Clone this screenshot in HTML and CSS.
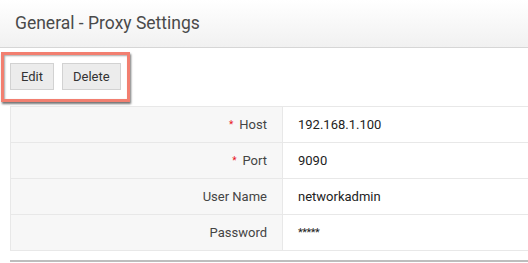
FILE: index.html
```html
<!DOCTYPE html>
<html lang="en">
<head>
  <meta charset="UTF-8">
  <title>General - Proxy Settings</title>
  <link rel="stylesheet" href="styles.css">
</head>
<body>

<header class="page-header">General - Proxy Settings</header>

<div class="toolbar">
  <button class="btn">Edit</button>
  <button class="btn">Delete</button>
</div>

<table class="details">
  <tr>
    <td class="label"><span class="req">*</span>Host</td>
    <td class="value">192.168.1.100</td>
  </tr>
  <tr>
    <td class="label"><span class="req">*</span>Port</td>
    <td class="value">9090</td>
  </tr>
  <tr>
    <td class="label">User Name</td>
    <td class="value">networkadmin</td>
  </tr>
  <tr>
    <td class="label">Password</td>
    <td class="value secret">*****</td>
  </tr>
</table>

<div class="next-section"></div>

</body>
</html>
```

FILE: styles.css
```css
/* Base */
body {
  margin: 0;
  font-family: Roboto, 'Liberation Sans', sans-serif;
  background: #fff;
  overflow: hidden;
  width: 528px;
}

.page-header {
  height: 47px;
  line-height: 47px;
  padding-left: 15px;
  font-size: 17.5px;
  color: #4a4a4a;
  background: linear-gradient(to bottom, #ffffff, #f1f1f1);
  border-bottom: 1px solid #d6d6d6;
}

/* Toolbar (highlighted) */
.toolbar {
  display: flex;
  width: max-content;
  gap: 8px;
  margin: 4px 0 0 1px;
  padding: 8px 6px 9px 6px;
  border: 3px solid #f27f70;
  box-shadow: 1px 2px 2px rgba(0, 0, 0, 0.55), inset 1px 1px 2px rgba(0, 0, 0, 0.35);
}

.btn {
  height: 27px;
  padding: 0 10px;
  font-family: inherit;
  font-size: 13px;
  color: #333;
  background: #ececec;
  border: 1px solid #d2d2d2;
  border-radius: 0;
}

/* Details table */
.details {
  margin: 4px 0 0 10px;
  width: 580px;
  border-collapse: collapse;
  font-size: 13px;
}

.details td {
  height: 35px;
  padding: 0;
  border: 1px solid #e8e8e8;
}

.label {
  width: 256px;
  padding-right: 15px !important;
  text-align: right;
  color: #444;
  background: #f7f7f7;
}

.value {
  padding-left: 15px !important;
  color: #222;
}

.req {
  color: #e8141a;
  font-size: 10px;
  margin-right: 6px;
  vertical-align: 1px;
}

.secret {
  font-size: 11px;
  letter-spacing: -0.5px;
}

.next-section {
  margin: 9px 0 0 10px;
  border-top: 2px solid #bdbdbd;
}
```
